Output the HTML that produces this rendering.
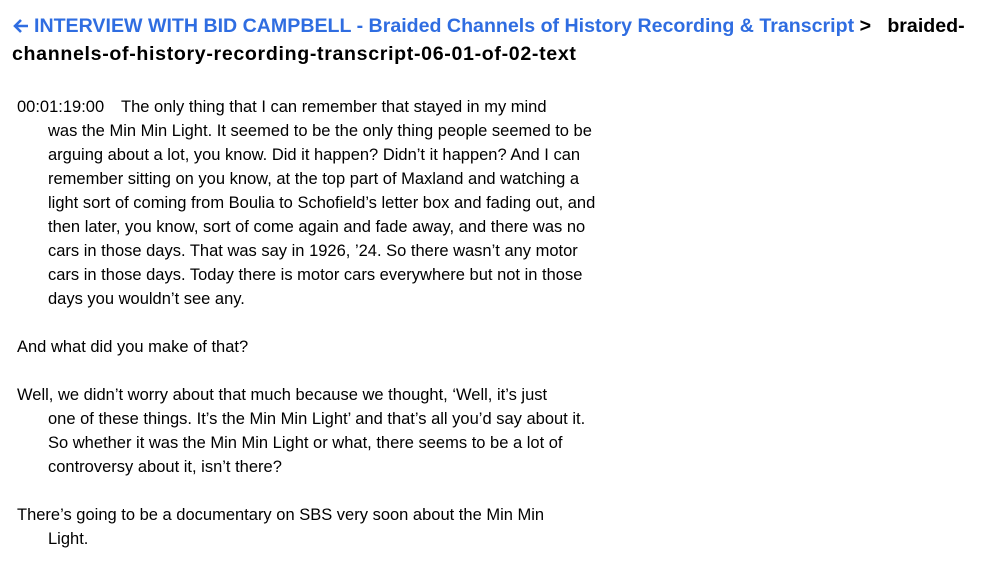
<!DOCTYPE html>
<html><head><meta charset="utf-8"><style>
body{margin:0;background:#fff;width:981px;height:564px;overflow:hidden;font-family:"Liberation Sans",sans-serif;color:#000}
.h{position:absolute;left:12px;top:12px;font-weight:bold;font-size:19.6px;line-height:28px;white-space:nowrap}
.h a{color:#2f6de1;text-decoration:none}
.h svg{vertical-align:-2px;margin-right:4px}
.l2{letter-spacing:0.66px}
.b{position:absolute;left:17px;top:95px;font-size:16.5px;line-height:24px;white-space:nowrap}
.b div{height:24px}
.i{padding-left:31px}
.t{display:inline-block;width:104px}
</style></head><body>
<div class="h"><a><svg width="18" height="16" viewBox="0 0 18 16"><path d="M16 8H3M9 2L3 8l6 6" fill="none" stroke="#2f6de1" stroke-width="2.6"/></svg>INTERVIEW WITH BID CAMPBELL - Braided Channels of History Recording &amp; Transcript</a> &gt;&nbsp;&nbsp; braided-<br><span class="l2">channels-of-history-recording-transcript-06-01-of-02-text</span></div>
<div class="b">
<div><span class="t">00:01:19:00</span>The only thing that I can remember that stayed in my mind</div>
<div class="i">was the Min Min Light. It seemed to be the only thing people seemed to be</div>
<div class="i">arguing about a lot, you know. Did it happen? Didn’t it happen? And I can</div>
<div class="i">remember sitting on you know, at the top part of Maxland and watching a</div>
<div class="i">light sort of coming from Boulia to Schofield’s letter box and fading out, and</div>
<div class="i">then later, you know, sort of come again and fade away, and there was no</div>
<div class="i">cars in those days. That was say in 1926, ’24. So there wasn’t any motor</div>
<div class="i">cars in those days. Today there is motor cars everywhere but not in those</div>
<div class="i">days you wouldn’t see any.</div>
<div></div>
<div>And what did you make of that?</div>
<div></div>
<div>Well, we didn’t worry about that much because we thought, ‘Well, it’s just</div>
<div class="i">one of these things. It’s the Min Min Light’ and that’s all you’d say about it.</div>
<div class="i">So whether it was the Min Min Light or what, there seems to be a lot of</div>
<div class="i">controversy about it, isn’t there?</div>
<div></div>
<div>There’s going to be a documentary on SBS very soon about the Min Min</div>
<div class="i">Light.</div>
</div>
</body></html>
